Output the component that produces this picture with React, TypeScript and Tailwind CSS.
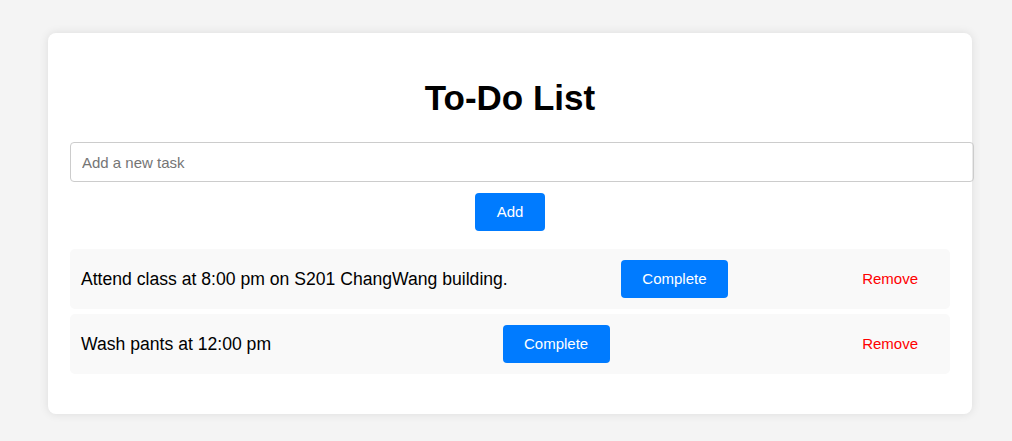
import React from "react";

const tasks = [
  "Attend class at 8:00 pm on S201 ChangWang building.",
  "Wash pants at 12:00 pm",
];

export default function App() {
  return (
    <div
      className="min-h-[441px] w-full bg-[#f4f4f4] pt-[33px]"
      style={{ fontFamily: '"Liberation Sans", Arial, sans-serif' }}
    >
      <div className="mx-[48px] w-[924px] rounded-[8px] bg-white px-[22px] pt-[22px] pb-[22px] shadow-[0_0_10px_rgba(0,0,0,0.1)]">
        <h1 className="mt-[23px] mb-[24px] text-center text-[35px] font-bold leading-[40px] text-black">
          To-Do List
        </h1>
        <input
          type="text"
          placeholder="Add a new task"
          className="box-border h-[40px] w-[904px] rounded-[4px] border border-[#cccccc] px-[11px] text-[15px] text-black outline-none placeholder:text-[#757575]"
        />
        <div className="mt-[11px] flex justify-center">
          <button className="h-[38px] rounded-[4px] bg-[#007bff] px-[21.5px] text-[15px] text-white">
            Add
          </button>
        </div>
        <ul className="mt-[18px] mb-[18px] flex flex-col gap-[5px]">
          {tasks.map((t) => (
            <li
              key={t}
              className="flex h-[60px] items-center justify-between rounded-[5px] bg-[#f9f9f9] px-[11px]"
            >
              <span className="text-[17.6px] text-black">{t}</span>
              <button className="h-[38px] rounded-[4px] bg-[#007bff] px-[21.5px] text-[15px] text-white">
                Complete
              </button>
              <button className="h-[38px] rounded-[4px] bg-transparent px-[21px] text-[15px] text-[#ff0000]">
                Remove
              </button>
            </li>
          ))}
        </ul>
      </div>
    </div>
  );
}
